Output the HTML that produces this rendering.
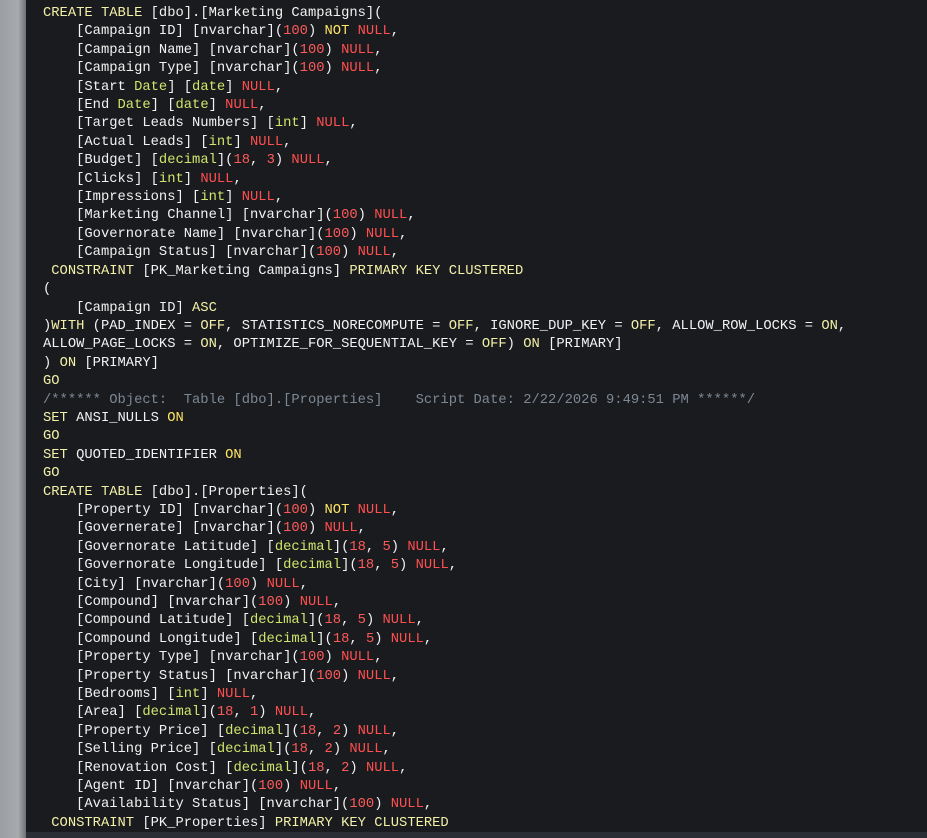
<!DOCTYPE html>
<html><head><meta charset="utf-8"><style>
html,body{margin:0;padding:0;width:927px;height:838px;overflow:hidden;background:#1a1b1e;}
.bar{position:absolute;left:0;top:0;width:26px;height:838px;background:linear-gradient(90deg,#9b9ea2,#a8abae 70%,#6e7175);}
.bot{position:absolute;left:26px;top:832px;width:901px;height:6px;background:#2b2e34;}
pre{position:absolute;left:43px;top:5px;margin:0;font-family:"Liberation Mono",monospace;font-size:13.8px;line-height:18.4px;color:#f2f2f2;white-space:pre;}
.k{color:#f3f0a8}.n{color:#ff4f4f}.d{color:#ff5a5a}.t{color:#cfe66c}.y{color:#ffe566}.c{color:#7d8894}
</style></head><body>
<div class="bar"></div><div class="bot"></div>
<pre><span class="k">CREATE TABLE</span> [dbo].[Marketing Campaigns](
    [Campaign ID] [nvarchar](<span class="d">100</span>) <span class="y">NOT</span> <span class="n">NULL</span>,
    [Campaign Name] [nvarchar](<span class="d">100</span>) <span class="n">NULL</span>,
    [Campaign Type] [nvarchar](<span class="d">100</span>) <span class="n">NULL</span>,
    [Start <span class="t">Date</span>] [<span class="t">date</span>] <span class="n">NULL</span>,
    [End <span class="t">Date</span>] [<span class="t">date</span>] <span class="n">NULL</span>,
    [Target Leads Numbers] [<span class="t">int</span>] <span class="n">NULL</span>,
    [Actual Leads] [<span class="t">int</span>] <span class="n">NULL</span>,
    [Budget] [<span class="t">decimal</span>](<span class="d">18</span>, <span class="d">3</span>) <span class="n">NULL</span>,
    [Clicks] [<span class="t">int</span>] <span class="n">NULL</span>,
    [Impressions] [<span class="t">int</span>] <span class="n">NULL</span>,
    [Marketing Channel] [nvarchar](<span class="d">100</span>) <span class="n">NULL</span>,
    [Governorate Name] [nvarchar](<span class="d">100</span>) <span class="n">NULL</span>,
    [Campaign Status] [nvarchar](<span class="d">100</span>) <span class="n">NULL</span>,
 <span class="k">CONSTRAINT</span> [PK_Marketing Campaigns] <span class="k">PRIMARY KEY CLUSTERED</span>
(
    [Campaign ID] <span class="k">ASC</span>
)<span class="k">WITH</span> (PAD_INDEX = <span class="k">OFF</span>, STATISTICS_NORECOMPUTE = <span class="k">OFF</span>, IGNORE_DUP_KEY = <span class="k">OFF</span>, ALLOW_ROW_LOCKS = <span class="k">ON</span>,
ALLOW_PAGE_LOCKS = <span class="k">ON</span>, OPTIMIZE_FOR_SEQUENTIAL_KEY = <span class="k">OFF</span>) <span class="k">ON</span> [PRIMARY]
) <span class="k">ON</span> [PRIMARY]
<span class="k">GO</span>
<span class="c">/****** Object:  Table [dbo].[Properties]    Script Date: 2/22/2026 9:49:51 PM ******/</span>
<span class="k">SET</span> ANSI_NULLS <span class="y">ON</span>
<span class="k">GO</span>
<span class="k">SET</span> QUOTED_IDENTIFIER <span class="y">ON</span>
<span class="k">GO</span>
<span class="k">CREATE TABLE</span> [dbo].[Properties](
    [Property ID] [nvarchar](<span class="d">100</span>) <span class="y">NOT</span> <span class="n">NULL</span>,
    [Governerate] [nvarchar](<span class="d">100</span>) <span class="n">NULL</span>,
    [Governorate Latitude] [<span class="t">decimal</span>](<span class="d">18</span>, <span class="d">5</span>) <span class="n">NULL</span>,
    [Governorate Longitude] [<span class="t">decimal</span>](<span class="d">18</span>, <span class="d">5</span>) <span class="n">NULL</span>,
    [City] [nvarchar](<span class="d">100</span>) <span class="n">NULL</span>,
    [Compound] [nvarchar](<span class="d">100</span>) <span class="n">NULL</span>,
    [Compound Latitude] [<span class="t">decimal</span>](<span class="d">18</span>, <span class="d">5</span>) <span class="n">NULL</span>,
    [Compound Longitude] [<span class="t">decimal</span>](<span class="d">18</span>, <span class="d">5</span>) <span class="n">NULL</span>,
    [Property Type] [nvarchar](<span class="d">100</span>) <span class="n">NULL</span>,
    [Property Status] [nvarchar](<span class="d">100</span>) <span class="n">NULL</span>,
    [Bedrooms] [<span class="t">int</span>] <span class="n">NULL</span>,
    [Area] [<span class="t">decimal</span>](<span class="d">18</span>, <span class="d">1</span>) <span class="n">NULL</span>,
    [Property Price] [<span class="t">decimal</span>](<span class="d">18</span>, <span class="d">2</span>) <span class="n">NULL</span>,
    [Selling Price] [<span class="t">decimal</span>](<span class="d">18</span>, <span class="d">2</span>) <span class="n">NULL</span>,
    [Renovation Cost] [<span class="t">decimal</span>](<span class="d">18</span>, <span class="d">2</span>) <span class="n">NULL</span>,
    [Agent ID] [nvarchar](<span class="d">100</span>) <span class="n">NULL</span>,
    [Availability Status] [nvarchar](<span class="d">100</span>) <span class="n">NULL</span>,
 <span class="k">CONSTRAINT</span> [PK_Properties] <span class="k">PRIMARY KEY CLUSTERED</span></pre>
</body></html>
